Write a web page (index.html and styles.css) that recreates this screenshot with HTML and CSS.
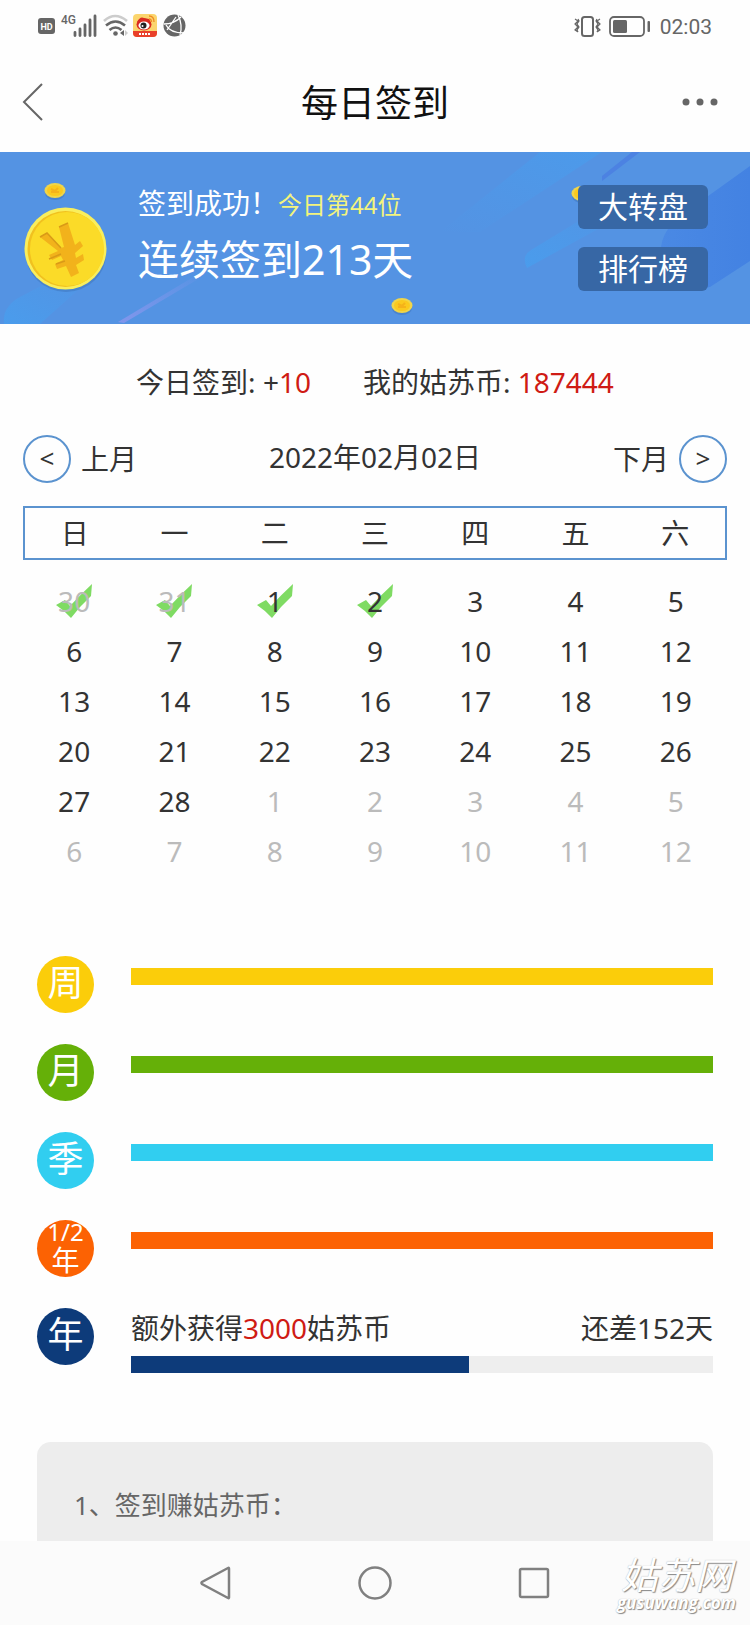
FILE: index.html
```html
<!DOCTYPE html>
<html lang="zh-CN">
<head>
  <meta charset="UTF-8">
  <meta name="viewport" content="width=device-width, initial-scale=1">
  <title>每日签到</title>
  <link rel="stylesheet" href="styles.css">
</head>
<body>
  <!-- 状态栏 -->
  <div class="status-bar">
    <svg class="status-left" width="150" height="28" viewBox="0 0 150 28">
      <rect x="0" y="5" width="17" height="16" rx="3" fill="#666"/>
      <text x="8.5" y="17" class="hd-text">HD</text>
      <text x="23" y="11" class="net-text">4G</text>
      <path d="M37 19.500v3M42 16v6.500M47 12v10.500M52 7v15.500M57 3v19.500" stroke="#666" stroke-width="2.800" fill="none" stroke-linecap="round"/>
      <path d="M66 8Q77-2 89 8" stroke="#ccc" stroke-width="2.600" fill="none"/>
      <path d="M68 12.500Q77.500 4.500 87 12.500M71.500 17Q77.500 12 83.500 17" stroke="#666" stroke-width="2.600" fill="none"/>
      <circle cx="77.500" cy="20.500" r="2.300" fill="#666"/>
      <path d="M82 20l4-3v6z" fill="#666"/><path d="M87 17l3 3-3 3z" fill="#ccc"/>
      <rect x="95" y="1" width="24" height="23" rx="4" fill="#fbd56d"/>
      <path d="M95 18h24v2a4 4 0 0 1-4 4h-16a4 4 0 0 1-4-4z" fill="#e9402a"/>
      <ellipse cx="106" cy="11.500" rx="7.500" ry="6" fill="#d92b20"/>
      <path d="M99 9q3-6 7-4l5 1 2 4z" fill="#d92b20"/>
      <ellipse cx="106" cy="12.500" rx="5.500" ry="4" fill="#fff"/>
      <circle cx="105.500" cy="12.500" r="3" fill="#222"/>
      <circle cx="104.500" cy="13" r="1" fill="#fff"/>
      <path d="M111 3q5 0 5 6M111 6q2.500 0 2.500 3" stroke="#f08a24" stroke-width="1.300" fill="none"/>
      <path d="M101 21h12" stroke="#fff" stroke-width="2" stroke-dasharray="2 1" fill="none"/>
      <circle cx="136.500" cy="12.500" r="11" fill="#666"/>
      <path d="M126 11Q136 11 143 4M128 12Q132 20 146 20M140 2Q145 12 142 22M129 17L138 4" stroke="#fff" stroke-width="1.300" fill="none"/>
    </svg>
    <div class="status-right">
      <svg width="78" height="24" viewBox="0 0 78 24">
        <path d="M1 4l3 2-3 3 3 3-3 3 3 2M4 4l1 2-2 3 2 3-2 3 1 2M26 4l-3 2 3 3-3 3 3 3-3 2M23 4l-1 2 2 3-2 3 2 3-1 2" stroke="#666" stroke-width="1.200" fill="none"/>
        <rect x="8" y="2" width="11" height="19" rx="2.500" stroke="#666" stroke-width="2" fill="none"/>
        <rect x="36" y="2" width="34" height="19" rx="4" stroke="#666" stroke-width="1.800" fill="none"/>
        <rect x="39" y="5" width="14" height="13" rx="1.500" fill="#666"/>
        <rect x="73.500" y="6" width="2.500" height="11" rx="1" fill="#666"/>
      </svg>
      <span class="clock">02:03</span>
    </div>
  </div>

  <!-- 标题栏 -->
  <header class="title-bar">
    <button type="button" class="icon-btn" aria-label="返回">
      <svg width="22" height="40" viewBox="0 0 22 40"><path d="M20 2L2 20l18 18" stroke="#666" stroke-width="2" fill="none"/></svg>
    </button>
    <h1>每日签到</h1>
    <button type="button" class="icon-btn" aria-label="更多">
      <svg width="36" height="8" viewBox="0 0 36 8"><g fill="#666"><circle cx="4" cy="4" r="3.500"/><circle cx="18" cy="4" r="3.500"/><circle cx="32" cy="4" r="3.500"/></g></svg>
    </button>
  </header>

  <!-- 签到横幅 -->
  <section class="banner">
    <svg class="banner-bg" viewBox="0 0 750 172" preserveAspectRatio="xMidYMid slice">
      <defs>
        <linearGradient id="beam" x1="0" y1="1" x2="1" y2="0">
          <stop offset="0" stop-color="#4a9cec"/><stop offset="1" stop-color="#4a9cec" stop-opacity="0"/>
        </linearGradient>
        <linearGradient id="beamTop" x1="0" y1="1" x2="1" y2="0">
          <stop offset="0" stop-color="#4a9cec" stop-opacity="0"/><stop offset="1" stop-color="#4a9cec"/>
        </linearGradient>
        <linearGradient id="purple" x1="0" y1="1" x2="1" y2="0">
          <stop offset="0" stop-color="#8296ec"/><stop offset="1" stop-color="#8296ec" stop-opacity="0"/>
        </linearGradient>
        <linearGradient id="deep" x1="0" y1="0" x2="1" y2="0">
          <stop offset="0" stop-color="#4a89e4"/><stop offset="1" stop-color="#4382e2"/>
        </linearGradient>
      </defs>
      <rect width="750" height="172" fill="#5493e3"/>
      <path d="M4 172q-2-16 14-26L60 124l36-2-56 50z" fill="url(#beam)"/>
      <path d="M118 170L205 118l-5 8-76 45z" fill="url(#purple)"/>
      <path d="M440 80L540 0h62L480 80z" fill="url(#beamTop)" opacity=".8"/>
      <path d="M527 116q-6-12 4-18L610 50l30 4z" fill="url(#beam)"/>
      <path d="M602 29L640 0h-8L602 24z" fill="#4c82e2"/>
      <path d="M750 14L690 57q-36 22-28 56 10 32 48 22l40-26z" fill="url(#deep)"/>
      <ellipse cx="66" cy="102" rx="40" ry="38" fill="#3d74ba" opacity=".5"/>
      <circle cx="65.500" cy="96.500" r="41" fill="#f9ee5c"/>
      <circle cx="65.500" cy="97" r="38" fill="#f1c11f"/>
      <circle cx="67" cy="97" r="37" fill="#fbdb28"/>
      <path d="M40 85l7-4 14 15 3-1-5-20 9-4 7 22 5-4 3 5-8 7 1 5 7-4 1 6-8 5 3 8-8 4-5-11-9 3-2-5 8-4-2-4-9 4-3-5 9-4z" fill="#f2b21b"/>
      <path d="M40 85l7-4 14 15M59 75l9-4M49 107l12-5M56 112l9-3" stroke="#d99a17" stroke-width="1.500" fill="none"/>
      <g id="coin">
        <ellipse cx="55" cy="41" rx="10" ry="7" fill="#3d74ba" opacity=".5"/>
        <ellipse cx="55" cy="38.500" rx="10.500" ry="7.500" fill="#f0d54a"/>
        <ellipse cx="55" cy="38.500" rx="8" ry="5.500" fill="#fbc91d"/>
        <path d="M51 37l4 2 3-3M55 38v3M51 40h8" stroke="#f5b21a" stroke-width="2" fill="none"/>
      </g>
      <use href="#coin" x="347" y="115"/>
      <use href="#coin" x="527" y="3"/>
    </svg>
    <div class="banner-text">
      <p class="banner-status">签到成功！<span class="rank">今日第44位</span></p>
      <p class="banner-days">连续签到213天</p>
    </div>
    <nav class="banner-links">
      <a href="#wheel">大转盘</a>
      <a href="#ranking">排行榜</a>
    </nav>
  </section>

  <div class="summary">
    <span>今日签到: +<em>10</em></span>
    <span>我的姑苏币: <em>187444</em></span>
  </div>

  <!-- 日历 -->
  <section class="calendar">
    <div class="month-nav">
      <button type="button" class="month-btn"><span class="arrow">&lt;</span>上月</button>
      <span class="month-date">2022年02月02日</span>
      <button type="button" class="month-btn">下月<span class="arrow">&gt;</span></button>
    </div>
    <table>
      <thead>
        <tr><th>日</th><th>一</th><th>二</th><th>三</th><th>四</th><th>五</th><th>六</th></tr>
      </thead>
      <tbody>
        <tr>
          <td class="other"><span class="signed"><svg viewBox="0 0 36 36"><path id="tick" d="M0 22l9-5 5 6Q24 12 36 1l-1 12Q24 23 15 35 9 28 0 22z" fill="#7fdb63"/></svg><b>30</b></span></td>
          <td class="other"><span class="signed"><svg viewBox="0 0 36 36"><use href="#tick"/></svg><b>31</b></span></td>
          <td><span class="signed"><svg viewBox="0 0 36 36"><use href="#tick"/></svg><b>1</b></span></td>
          <td><span class="signed"><svg viewBox="0 0 36 36"><use href="#tick"/></svg><b>2</b></span></td>
          <td>3</td><td>4</td><td>5</td>
        </tr>
        <tr><td>6</td><td>7</td><td>8</td><td>9</td><td>10</td><td>11</td><td>12</td></tr>
        <tr><td>13</td><td>14</td><td>15</td><td>16</td><td>17</td><td>18</td><td>19</td></tr>
        <tr><td>20</td><td>21</td><td>22</td><td>23</td><td>24</td><td>25</td><td>26</td></tr>
        <tr><td>27</td><td>28</td><td class="other">1</td><td class="other">2</td><td class="other">3</td><td class="other">4</td><td class="other">5</td></tr>
        <tr class="other"><td>6</td><td>7</td><td>8</td><td>9</td><td>10</td><td>11</td><td>12</td></tr>
      </tbody>
    </table>
  </section>

  <!-- 连续签到进度 -->
  <section class="goals">
    <div class="goal week">
      <span class="badge">周</span>
      <div class="goal-body"><div class="track"><div class="fill" style="width: 100%"></div></div></div>
    </div>
    <div class="goal month">
      <span class="badge">月</span>
      <div class="goal-body"><div class="track"><div class="fill" style="width: 100%"></div></div></div>
    </div>
    <div class="goal season">
      <span class="badge">季</span>
      <div class="goal-body"><div class="track"><div class="fill" style="width: 100%"></div></div></div>
    </div>
    <div class="goal half">
      <span class="badge two-line"><span class="fraction">1/2</span><span>年</span></span>
      <div class="goal-body"><div class="track"><div class="fill" style="width: 100%"></div></div></div>
    </div>
    <div class="goal year">
      <span class="badge">年</span>
      <div class="goal-body">
        <div class="goal-info"><span>额外获得<em>3000</em>姑苏币</span><span>还差152天</span></div>
        <div class="track"><div class="fill" style="width: 58%"></div></div>
      </div>
    </div>
  </section>

  <section class="rules">
    <p>1、签到赚姑苏币：</p>
  </section>

  <!-- 系统导航 -->
  <footer class="sys-nav">
    <button type="button" class="icon-btn" aria-label="后退">
      <svg width="34" height="36" viewBox="0 0 34 36"><path d="M30 3.500v29q0 1-1 .500L3 19q-1-1 0-2L29 3q1-.500 1 .500z" stroke="#808080" stroke-width="2.500" fill="none"/></svg>
    </button>
    <button type="button" class="icon-btn" aria-label="主页">
      <svg width="34" height="36" viewBox="0 0 34 36"><circle cx="17" cy="18" r="15.500" stroke="#808080" stroke-width="2.500" fill="none"/></svg>
    </button>
    <button type="button" class="icon-btn" aria-label="任务">
      <svg width="34" height="36" viewBox="0 0 34 36"><rect x="3" y="4" width="28" height="28" rx="1.500" stroke="#808080" stroke-width="2.500" fill="none"/></svg>
    </button>
    <div class="watermark">
      <span class="mark-name">姑苏网</span>
      <span class="mark-url">gusuwang.com</span>
    </div>
  </footer>
</body>
</html>
```

FILE: styles.css
```css
:root {
  --blue: #5b93cf;
  --text: #333;
  --red: #cf1b14;
  --muted: #bbb;
}
* {
  box-sizing: border-box;
}
body {
  margin: 0;
  min-height: 100vh;
  display: flex;
  flex-direction: column;
  background: #fefefe;
  color: var(--text);
  font-family: "Noto Sans", "Noto Sans CJK SC", sans-serif;
  font-size: 28px;
  line-height: 40px;
}
h1, p {
  margin: 0;
  font-weight: 400;
}
em {
  font-style: normal;
  color: var(--red);
}
button {
  padding: 0;
  border: none;
  background: none;
  color: inherit;
  font: inherit;
  cursor: pointer;
}
svg {
  display: block;
}

/* 状态栏 */
.status-bar {
  height: 52px;
  padding: 2px 38px 0;
  display: flex;
  align-items: center;
  justify-content: space-between;
  font-family: Roboto, sans-serif;
}
.status-right {
  display: flex;
  align-items: center;
  gap: 8px;
}
.hd-text {
  font-size: 9px;
  font-weight: 700;
  fill: #fff;
  text-anchor: middle;
}
.net-text {
  font-size: 12px;
  font-weight: 500;
  fill: #666;
}
.clock {
  font-size: 21px;
  color: #666;
}

/* 标题栏 */
.title-bar {
  height: 100px;
  padding: 0 32px 0 22px;
  display: flex;
  align-items: center;
  justify-content: space-between;
}
.title-bar .icon-btn:first-child {
  width: 46px;
}
h1 {
  padding-top: 2px;
  font-size: 37px;
  color: #111;
}

/* 签到横幅 */
.banner {
  position: relative;
  height: 172px;
  padding: 0 42px 0 138px;
  display: flex;
  align-items: center;
  justify-content: space-between;
  color: #fff;
  overflow: hidden;
}
.banner-bg {
  position: absolute;
  top: 0;
  left: 0;
  width: 100%;
  height: 100%;
}
.banner-text {
  position: relative;
}
.rank {
  font-size: 24px;
  color: #f3f47c;
}
.banner-days {
  font-size: 41px;
  line-height: 68px;
}
.banner-links {
  position: relative;
  display: flex;
  flex-direction: column;
  gap: 18px;
}
.banner-links a {
  padding: 0 20px;
  border-radius: 6px;
  background: #3767a5;
  color: #fff;
  font-size: 30px;
  line-height: 44px;
  text-decoration: none;
}

.summary {
  padding: 38px 0 33px;
  display: flex;
  justify-content: center;
  gap: 52px;
}

/* 日历 */
.calendar {
  padding: 0 23px;
}
.month-nav {
  display: flex;
  align-items: center;
  justify-content: space-between;
  margin-bottom: 23px;
}
.month-date {
  padding-bottom: 4px;
}
.month-btn {
  display: flex;
  align-items: center;
  gap: 10px;
}
.arrow {
  width: 48px;
  height: 48px;
  border: 2px solid var(--blue);
  border-radius: 50%;
  font-size: 26px;
  line-height: 42px;
  text-align: center;
}
table {
  width: 100%;
  border-collapse: collapse;
  table-layout: fixed;
}
thead {
  border: 2px solid var(--blue);
}
th, td {
  height: 50px;
  padding: 0;
  font-weight: 400;
  text-align: center;
}
th {
  height: 52px;
}
tbody::before {
  content: "";
  display: block;
  height: 16px;
}
.other {
  color: var(--muted);
}
.signed {
  display: grid;
  place-items: center;
}
.signed svg, .signed b {
  grid-area: 1 / 1;
  font-weight: 400;
}
.signed svg {
  width: 36px;
  height: 36px;
}

/* 连续签到进度 */
.goals {
  padding: 80px 37px 0;
  display: flex;
  flex-direction: column;
  gap: 31px;
}
.goal {
  display: flex;
  gap: 37px;
}
.badge {
  width: 57px;
  height: 57px;
  flex: none;
  border-radius: 50%;
  background: var(--goal);
  color: #fff;
  font-size: 36px;
  line-height: 54px;
  text-align: center;
}
.two-line {
  display: flex;
  flex-direction: column;
  align-items: center;
  justify-content: center;
  padding-bottom: 6px;
  font-size: 28px;
  line-height: 29px;
}
.fraction {
  font-size: 24px;
}
.goal-body {
  flex: 1;
  padding-top: 12px;
}
.track {
  height: 17px;
  background: #eee;
}
.fill {
  height: 100%;
  background: var(--goal);
}
.goal-info {
  display: flex;
  justify-content: space-between;
  margin-bottom: 8px;
}
.year .goal-body {
  padding-top: 0;
}
.week { --goal: #fbcd0a; }
.month { --goal: #65b008; }
.season { --goal: #31cef0; }
.half { --goal: #fc6203; }
.year { --goal: #0d3b7a; }

.rules {
  flex: 1;
  margin: 69px 37px 0;
  padding: 43px 37px 15px;
  border-radius: 14px 14px 0 0;
  background: #ededed;
  color: #666;
  font-size: 26px;
}

/* 系统导航 */
.sys-nav {
  position: relative;
  height: 84px;
  display: flex;
  align-items: center;
  justify-content: center;
  gap: 125px;
  background: #fbfbfb;
}
.watermark {
  position: absolute;
  right: 14px;
  bottom: 12px;
  display: flex;
  flex-direction: column;
  align-items: center;
  color: #fff;
  font-style: italic;
  text-shadow: 1px 1px 1px #888, 0 0 1px #aaa;
}
.mark-name {
  font-size: 37px;
  line-height: 37px;
}
.mark-url {
  font-family: "Open Sans", sans-serif;
  font-size: 17px;
  font-weight: 700;
  line-height: 20px;
}
```
